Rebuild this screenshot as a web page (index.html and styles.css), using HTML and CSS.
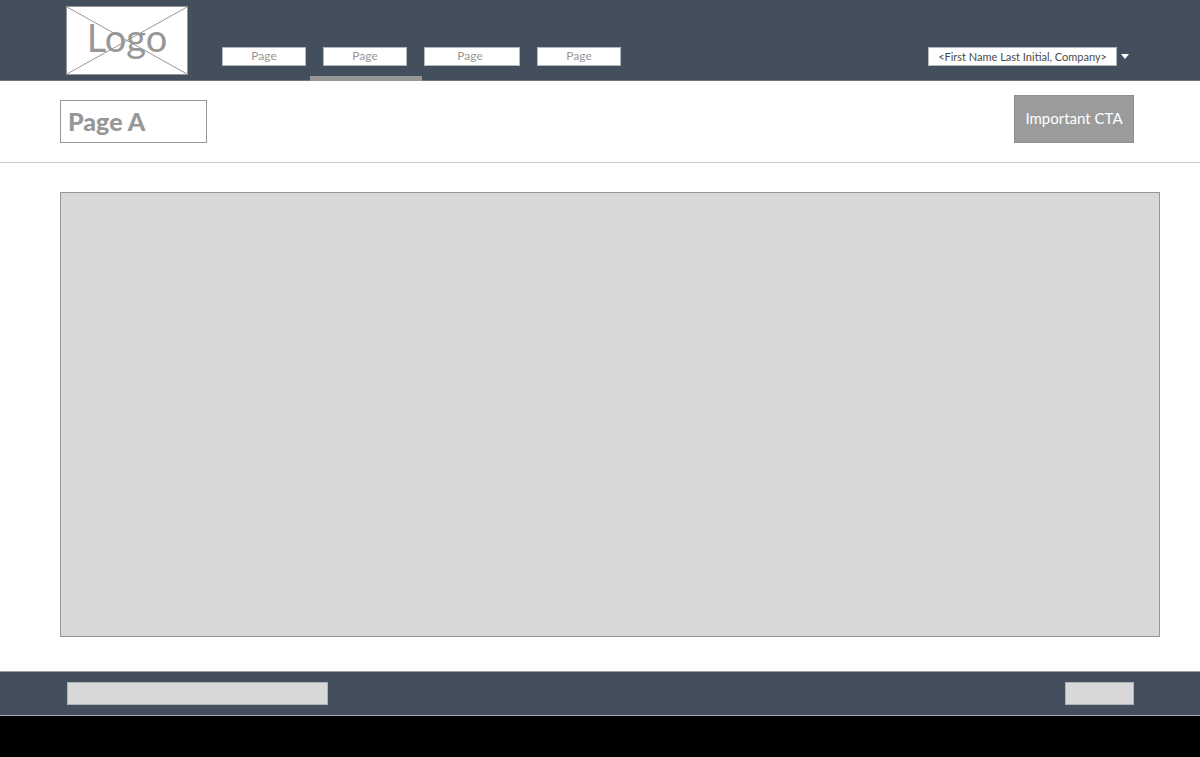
FILE: index.html
```html
<!DOCTYPE html>
<html lang="en">
<head>
<meta charset="utf-8">
<meta name="viewport" content="width=device-width, initial-scale=1">
<title>Page A</title>
<link rel="stylesheet" href="styles.css">
</head>
<body>
<header class="topbar">
  <a class="logo" href="#">
    <svg class="logo-cross" viewBox="0 0 120 68" preserveAspectRatio="none" aria-hidden="true">
      <path d="M0 0L120 68M120 0L0 68"/>
    </svg>
    <span class="logo-text">Logo</span>
  </a>
  <nav class="nav">
    <a class="nav-link" href="#">Page</a>
    <a class="nav-link nav-link-active" href="#" aria-current="page">Page</a>
    <a class="nav-link nav-link-wide" href="#">Page</a>
    <a class="nav-link" href="#">Page</a>
  </nav>
  <button class="account" type="button">
    <span class="account-name">&lt;First Name Last Initial, Company&gt;</span>
    <svg class="caret" viewBox="0 0 8 5" aria-hidden="true"><path d="M0 0H8L4 5Z"/></svg>
  </button>
</header>
<section class="page-head">
  <h1 class="page-title">Page A</h1>
  <button class="cta" type="button">Important CTA</button>
</section>
<main class="content">
  <div class="panel"></div>
</main>
<footer class="footer">
  <div class="footer-block footer-block-long"></div>
  <div class="footer-block"></div>
</footer>
</body>
</html>
```

FILE: styles.css
```css
* {
  box-sizing: border-box;
}

body {
  display: flex;
  flex-direction: column;
  min-height: 100vh;
  margin: 0;
  padding-bottom: 41px;
  background: #000;
  color: #979797;
  font-family: Lato, "Liberation Sans", sans-serif;
}

.topbar {
  display: flex;
  align-items: flex-end;
  padding: 6px 71px 5px 66px;
  border-bottom: 1px solid #6f7780;
  background: #444f5d;
}

.logo {
  position: relative;
  display: flex;
  justify-content: center;
  width: 122px;
  height: 69px;
  border: 1px solid #979797;
  background: #fff;
  color: #979797;
  text-decoration: none;
}

.logo-cross {
  position: absolute;
  inset: 0;
  width: 100%;
  height: 100%;
  fill: none;
  stroke: #979797;
}

.logo-text {
  position: relative;
  font-size: 38px;
  line-height: 60px;
}

.nav {
  display: flex;
  gap: 17px;
  margin: 0 auto 9px 34px;
}

.nav-link {
  position: relative;
  width: 84px;
  height: 19px;
  border: 1px solid #b4b8bd;
  background: #fff;
  color: #979797;
  font-size: 12px;
  line-height: 16px;
  text-align: center;
  text-decoration: none;
}

.nav-link-wide {
  width: 96px;
  padding-right: 4px;
}

.nav-link-active::after {
  content: "";
  position: absolute;
  top: 28px;
  left: -14px;
  right: -16px;
  height: 5px;
  background: #979797;
}

.account {
  display: flex;
  align-items: center;
  gap: 4px;
  margin-bottom: 9px;
  padding: 0;
  border: 0;
  background: none;
  font-family: inherit;
}

.account-name {
  padding: 0 9px;
  border: 1px solid #b4b8bd;
  background: #fff;
  color: #4a4a4a;
  font-size: 11px;
  line-height: 17px;
}

.caret {
  width: 8px;
  height: 5px;
  fill: #fff;
}

.page-head {
  display: flex;
  align-items: flex-end;
  justify-content: space-between;
  padding: 14px 66px 19px 60px;
  border-bottom: 1px solid #c8caca;
  background: #fff;
}

.page-title {
  width: 147px;
  margin: 0;
  padding: 0 7px;
  border: 1px solid #979797;
  font-size: 25px;
  font-weight: 900;
  line-height: 41px;
}

.cta {
  padding: 0 8px 2px;
  width: 120px;
  height: 48px;
  border: 1px solid #8f8f8f;
  background: #9b9b9b;
  color: #fff;
  font-family: inherit;
  font-size: 15px;
  white-space: nowrap;
}

.content {
  display: flex;
  flex: 1;
  padding: 29px 40px 34px 60px;
  background: #fff;
}

.panel {
  flex: 1;
  border: 1px solid #979797;
  background: #d8d8d8;
}

.footer {
  display: flex;
  justify-content: space-between;
  padding: 10px 66px 10px 67px;
  border-top: 1px solid #979da4;
  border-bottom: 1px solid #a9adb5;
  background: #444f5d;
}

.footer-block {
  width: 69px;
  height: 23px;
  border: 1px solid #b0b3b6;
  background: #d8d8d8;
}

.footer-block-long {
  width: 261px;
}
```
